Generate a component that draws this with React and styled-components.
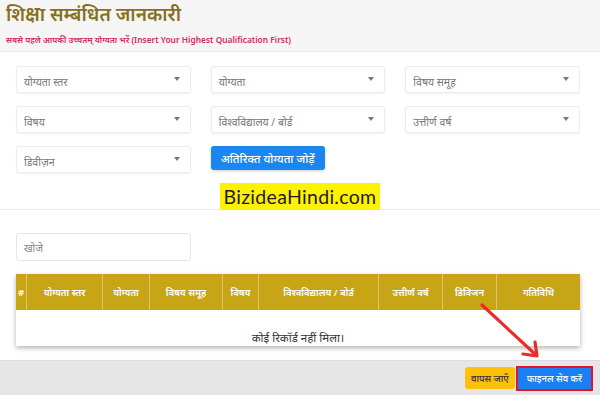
import React from "react";
import styled, { createGlobalStyle } from "styled-components";

const GlobalStyle = createGlobalStyle`
  html, body { margin: 0; padding: 0; background: #ffffff; }
  body { font-family: "Noto Sans", "Noto Sans Devanagari", "Lohit Devanagari", sans-serif; }
  * { box-sizing: border-box; }
`;

const Page = styled.div`
  position: relative;
  width: 600px;
  min-height: 395px;
  display: flex;
  flex-direction: column;
  background: #fff;
  overflow: hidden;
`;

const Header = styled.div`
  height: 52px;
  background: #f5f5f5;
  border-bottom: 1px solid #e9e9e9;
  padding: 2px 6px 0;
`;

const Title = styled.div`
  font-size: 19px;
  line-height: 25px;
  font-weight: 600;
  color: #85701f;
`;

const Subtitle = styled.div`
  margin-top: 6px;
  font-size: 8.4px;
  line-height: 13px;
  font-weight: 600;
  color: #d42a5e;
`;

const FormGrid = styled.div`
  display: grid;
  grid-template-columns: repeat(3, 1fr);
  gap: 13px 20px;
  padding: 14px 20px 0 16px;
`;

const Select = styled.div`
  position: relative;
  height: 27px;
  border: 1px solid #ececec;
  border-radius: 3px;
  background: #fff;
  box-shadow: 0 1px 2px rgba(0, 0, 0, 0.06);
  display: flex;
  align-items: center;
  padding: 4px 0 0 7px;
  font-size: 10.5px;
  color: #777;
`;

const Caret = styled.span`
  position: absolute;
  right: 10px;
  top: 10px;
  width: 0;
  height: 0;
  border-left: 3.5px solid transparent;
  border-right: 3.5px solid transparent;
  border-top: 4px solid #777;
`;

const AddButton = styled.button`
  justify-self: start;
  height: 24px;
  padding: 0 10px;
  border: none;
  border-radius: 3px;
  background: #1a86f0;
  color: #fff;
  font-family: inherit;
  font-size: 11.5px;
  font-weight: 500;
  box-shadow: 0 1px 3px rgba(0, 0, 0, 0.2);
`;

const WatermarkRow = styled.div`
  margin-top: 11px;
  height: 26px;
  display: flex;
  justify-content: center;
  border-bottom: 1px solid #ececec;
`;

const Watermark = styled.div`
  position: relative;
  z-index: 1;
  height: 27px;
  width: 160px;
  margin-top: -1px;
  background: #fff200;
  color: #1d1d1d;
  font-family: "Lato", "Inter", sans-serif;
  font-size: 19.5px;
  letter-spacing: 0.3px;
  display: flex;
  align-items: center;
  justify-content: center;
`;

const Search = styled.div`
  margin: 23px 0 0 16px;
  width: 175px;
  height: 28px;
  border: 1px solid #e6e6e6;
  border-radius: 3px;
  display: flex;
  align-items: center;
  padding: 2px 0 0 7px;
  font-size: 10.5px;
  color: #888;
`;

const Table = styled.div`
  margin: 13px 20px 0 16px;
  background: #fff;
  box-shadow: 0 2px 5px rgba(0, 0, 0, 0.3);
`;

const HeadRow = styled.div`
  display: grid;
  grid-template-columns: 10px 76px 47px 73px 36px 120px 64px 54px 84px;
  height: 36px;
  background: #c8a517;
`;

const HeadCell = styled.div`
  display: flex;
  align-items: center;
  justify-content: center;
  color: #fff;
  font-size: 9.5px;
  font-weight: 600;
  border-left: ${(p) => (p.$first ? "none" : "1px solid #dcc567")};
`;

const EmptyRow = styled.div`
  height: 36px;
  display: flex;
  align-items: flex-end;
  justify-content: center;
  padding-bottom: 1px;
  font-size: 11.5px;
  color: #333;
`;

const Footer = styled.div`
  margin-top: auto;
  height: 35px;
  background: #e6e6e6;
  border-top: 1px solid #dcdcdc;
  display: flex;
  align-items: center;
  justify-content: flex-end;
  gap: 1px;
  padding-right: 7px;
`;

const FooterButton = styled.button`
  height: ${(p) => (p.$highlight ? "25px" : "22px")};
  padding: 0 ${(p) => (p.$highlight ? "9px" : "6px")};
  border: ${(p) => (p.$highlight ? "2px solid #e3132a" : "none")};
  border-radius: ${(p) => (p.$highlight ? "0" : "3px")};
  background: ${(p) => (p.$highlight ? "#1a7ff2" : "#ffc107")};
  color: ${(p) => (p.$highlight ? "#fff" : "#333")};
  font-family: inherit;
  font-size: 9.5px;
  font-weight: 500;
`;

const ArrowSvg = styled.svg`
  position: absolute;
  left: 476px;
  top: 300px;
  z-index: 2;
`;

const headers = [
  "#",
  "योग्यता स्तर",
  "योग्यता",
  "विषय समूह",
  "विषय",
  "विश्वविद्यालय / बोर्ड",
  "उत्तीर्ण वर्ष",
  "डिविजन",
  "गतिविधि",
];

const selects = [
  "योग्यता स्तर",
  "योग्यता",
  "विषय समूह",
  "विषय",
  "विश्वविद्यालय / बोर्ड",
  "उत्तीर्ण वर्ष",
  "डिवीज़न",
];

export default function App() {
  return (
    <>
      <GlobalStyle />
      <Page>
        <Header>
          <Title>शिक्षा सम्बंधित जानकारी</Title>
          <Subtitle>
            सबसे पहले आपकी उच्चतम् योग्यता भरें (Insert Your Highest Qualification First)
          </Subtitle>
        </Header>

        <FormGrid>
          {selects.map((s) => (
            <Select key={s}>
              {s}
              <Caret />
            </Select>
          ))}
          <AddButton>अतिरिक्त योग्यता जोड़ें</AddButton>
        </FormGrid>

        <WatermarkRow>
          <Watermark>BizideaHindi.com</Watermark>
        </WatermarkRow>

        <Search>खोजे</Search>

        <Table>
          <HeadRow>
            {headers.map((h, i) => (
              <HeadCell key={h} $first={i === 0}>
                {h}
              </HeadCell>
            ))}
          </HeadRow>
          <EmptyRow>कोई रिकॉर्ड नहीं मिला।</EmptyRow>
        </Table>

        <Footer>
          <FooterButton>वापस जाएँ</FooterButton>
          <FooterButton $highlight>फाइनल सेव करें</FooterButton>
        </Footer>

        <ArrowSvg width="70" height="62" viewBox="0 0 70 62">
          <line x1="6" y1="5" x2="60" y2="55" stroke="#ea2b2b" strokeWidth="3.2" strokeLinecap="round" />
          <polyline
            points="47,54 61,56 59,42"
            fill="none"
            stroke="#ea2b2b"
            strokeWidth="3.2"
            strokeLinecap="round"
            strokeLinejoin="round"
          />
        </ArrowSvg>
      </Page>
    </>
  );
}
